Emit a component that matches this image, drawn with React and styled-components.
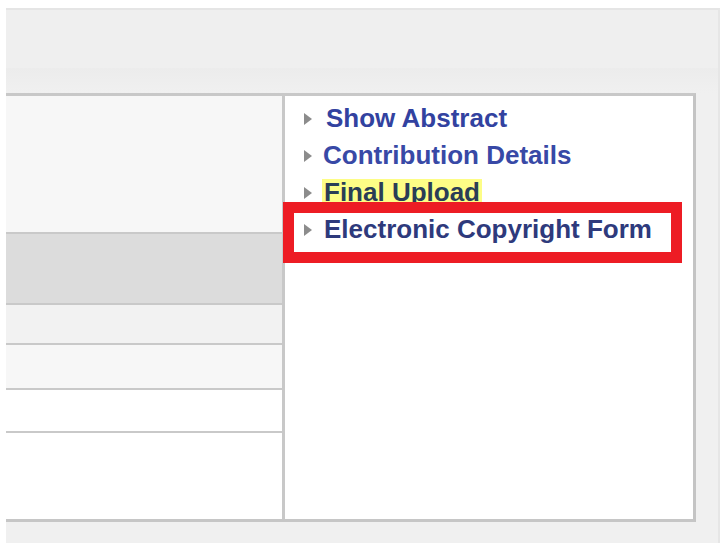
import React from "react";
import styled, { createGlobalStyle } from "styled-components";

const Global = createGlobalStyle`
  html, body { margin: 0; padding: 0; background: #ffffff; }
  body { font-family: "Liberation Sans", Arial, sans-serif; }
`;

const Page = styled.div`
  width: 727px;
  height: 558px;
  background: #ffffff;
  padding: 8px 0 0 6px;
  box-sizing: border-box;
`;

const Panel = styled.div`
  position: relative;
  width: 714px;
  height: 535px;
  box-sizing: border-box;
  background: #f0f0f0;
  border-top: 2px solid #e5e5e5;
  border-right: 2px solid #e6e6e6;
  display: flex;
  flex-direction: column;
`;

const HeaderBand = styled.div`
  height: 58px;
  background: #efefef;
  flex: none;
`;

const SubBand = styled.div`
  height: 25px;
  background: linear-gradient(#ececec, #f0f0f0);
  flex: none;
`;

const Table = styled.div`
  display: grid;
  grid-template-columns: 279px 1fr;
  width: 690px;
  height: 429px;
  box-sizing: border-box;
  border-top: 3px solid #c8c8c8;
  border-bottom: 3px solid #c6c6c6;
  border-right: 3px solid #c4c4c4;
  background: #ffffff;
  flex: none;
`;

const LeftCol = styled.div`
  display: flex;
  flex-direction: column;
  border-right: 3px solid #c8c8c8;
`;

const Row = styled.div`
  height: ${(p) => p.$h}px;
  flex: ${(p) => (p.$grow ? "1" : "none")};
  background: ${(p) => p.$bg};
  border-bottom: ${(p) => (p.$last ? "none" : "2px solid #c9c9c9")};
`;

const RightCol = styled.div`
  display: flex;
  flex-direction: column;
  padding: 4px 0 0 19px;
  background: #ffffff;
`;

const Item = styled.div`
  display: flex;
  align-items: center;
  height: 37px;
  gap: ${(p) => p.$gap}px;
`;

const Arrow = styled.span`
  width: 0;
  height: 0;
  border-top: 6px solid transparent;
  border-bottom: 6px solid transparent;
  border-left: 8px solid #8c8c8c;
  flex: none;
`;

const Link = styled.span`
  font-family: "Liberation Sans", Arial, sans-serif;
  font-weight: bold;
  font-size: 26px;
  line-height: 37px;
  color: ${(p) => p.$color};
  white-space: nowrap;
  ${(p) =>
    p.$mark &&
    `
    background: linear-gradient(#fdfd86, #fdfd86) no-repeat;
    background-size: 100% 24px;
    background-position: 0 5px;
    padding: 0 2px;
    margin-left: -2px;
  `}
`;

const Annotation = styled.div`
  position: absolute;
  left: 277px;
  top: 192px;
  width: 399px;
  height: 61px;
  box-sizing: border-box;
  border: 11.5px solid #ed1c24;
  pointer-events: none;
`;

const links = [
  { text: "Show Abstract", color: "#3242a0", gap: 14 },
  { text: "Contribution Details", color: "#3849a6", gap: 11 },
  { text: "Final Upload", color: "#2a3d56", gap: 12, mark: true },
  { text: "Electronic Copyright Form", color: "#2e3a7c", gap: 12 },
];

export default function App() {
  return (
    <Page>
      <Global />
      <Panel>
        <HeaderBand />
        <SubBand />
        <Table>
          <LeftCol>
            <Row $h={136} $bg="#f7f7f7" />
            <Row $h={69} $bg="#dcdcdc" />
            <Row $h={38} $bg="#f2f2f2" />
            <Row $h={43} $bg="#f7f7f7" />
            <Row $h={41} $bg="#ffffff" />
            <Row $grow $last $bg="#ffffff" />
          </LeftCol>
          <RightCol>
            {links.map((l) => (
              <Item key={l.text} $gap={l.gap}>
                <Arrow />
                <Link $color={l.color} $mark={l.mark}>
                  {l.text}
                </Link>
              </Item>
            ))}
          </RightCol>
        </Table>
        <Annotation />
      </Panel>
    </Page>
  );
}
